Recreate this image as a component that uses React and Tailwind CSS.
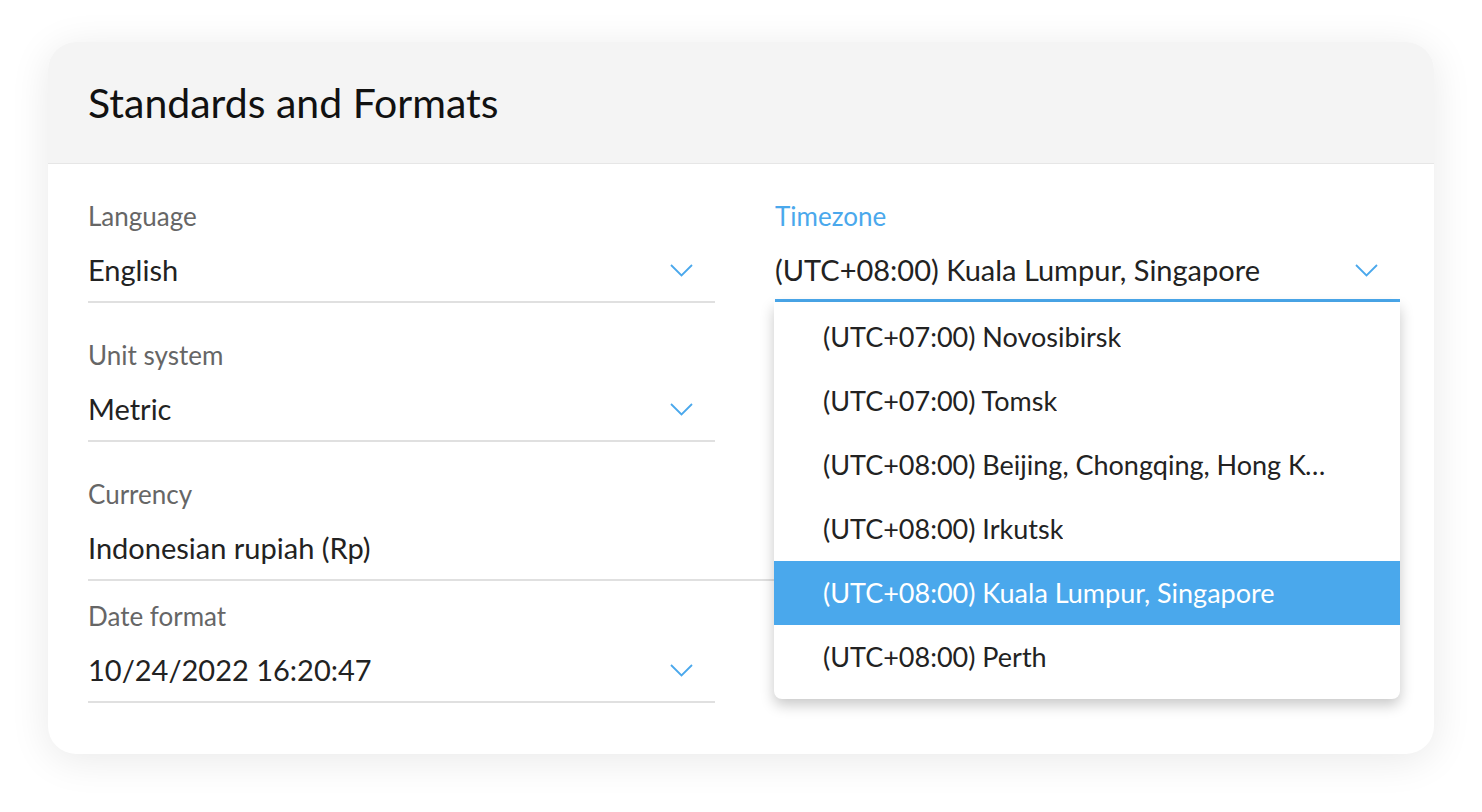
import React from 'react';

const BLUE = '#4aa8ec';

function Chevron({ className = '' }) {
  return (
    <svg className={className} width="23" height="13" viewBox="0 0 23 13" fill="none">
      <polyline points="1,1 11.5,11.5 22,1" stroke={BLUE} strokeWidth="1.8" />
    </svg>
  );
}

function Field({ label, value, chevron = true }) {
  return (
    <div className="border-b-2 border-[#e0e0e0] pb-[13px]">
      <div className="text-[26px] leading-[30px] text-[#666]">{label}</div>
      <div className="mt-[21px] flex items-center justify-between h-[36px]">
        <span className="text-[29px] leading-[36px] text-[#222]">{value}</span>
        {chevron && <Chevron className="mr-[22px]" />}
      </div>
    </div>
  );
}

const zones = [
  '(UTC+07:00) Novosibirsk',
  '(UTC+07:00) Tomsk',
  '(UTC+08:00) Beijing, Chongqing, Hong Kong, Urumqi',
  '(UTC+08:00) Irkutsk',
  '(UTC+08:00) Kuala Lumpur, Singapore',
  '(UTC+08:00) Perth',
];

export default function App() {
  const selected = '(UTC+08:00) Kuala Lumpur, Singapore';

  return (
    <div
      className="min-h-screen bg-white pt-[42px] px-12"
      style={{ fontFamily: 'Lato, "Open Sans", sans-serif' }}
    >
      <div className="rounded-[28px] bg-white shadow-[0_6px_40px_rgba(0,0,0,0.09)]">
        {/* Header */}
        <div className="h-[122px] bg-[#f4f4f4] border-b border-[#e6e6e6] rounded-t-[28px] pl-10 flex items-center">
          <h1 className="text-[41px] text-[#111]">Standards and Formats</h1>
        </div>

        {/* Body */}
        <div className="px-10 pt-[37px] pb-[51px] grid grid-cols-[627px_625px] gap-x-[60px] items-start">
          <Field label="Language" value="English" />

          {/* Timezone (open) */}
          <div className="relative z-10">
            <div className="border-b-[3px] border-[#4aa8ec] pb-[11px]">
              <div className="text-[26px] leading-[30px] text-[#4aa8ec]">Timezone</div>
              <div className="mt-[21px] flex items-center justify-between h-[36px]">
                <span className="text-[29px] leading-[36px] text-[#222]">{selected}</span>
                <Chevron className="mr-[22px]" />
              </div>
            </div>
            <div className="absolute top-full -left-px w-[626px] bg-white rounded-b-lg shadow-[0_6px_14px_rgba(0,0,0,0.22)] pt-[3px] pb-[10px]">
              {zones.map((z) => (
                <div
                  key={z}
                  className={`h-[64px] flex items-center pl-[49px] pr-[60px] ${
                    z === selected ? 'bg-[#4aa8ec] text-white' : 'text-[#222]'
                  }`}
                >
                  <span className="text-[27px] leading-[36px] whitespace-nowrap overflow-hidden text-ellipsis">{z}</span>
                </div>
              ))}
            </div>
          </div>

          <div className="mt-[37px]">
            <Field label="Unit system" value="Metric" />
          </div>
          <div className="mt-[37px] h-[102px] border-b-2 border-[#e0e0e0]" />

          <div className="mt-[37px] col-span-2 pr-[24px]">
            <Field label="Currency" value="Indonesian rupiah (Rp)" chevron={false} />
          </div>

          <div className="mt-[20px]">
            <Field label="Date format" value="10/24/2022 16:20:47" />
          </div>
          <div />
        </div>
      </div>
    </div>
  );
}
